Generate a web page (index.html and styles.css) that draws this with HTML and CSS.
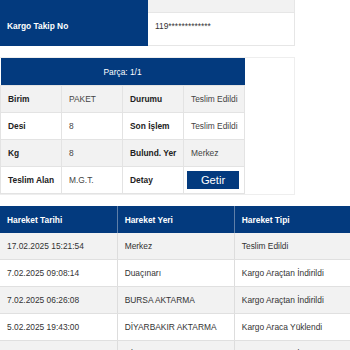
FILE: index.html
```html
<!DOCTYPE html>
<html lang="tr">
<head>
<meta charset="utf-8">
<link rel="stylesheet" href="styles.css">
</head>
<body>
<table class="info">
  <tr class="info-top">
    <th></th>
    <td></td>
  </tr>
  <tr class="info-main">
    <th>Kargo Takip No</th>
    <td>119*************</td>
  </tr>
</table>

<div class="piece-box">
  <table class="piece">
    <tr>
      <th colspan="4" class="piece-head">Parça: 1/1</th>
    </tr>
    <tr class="alt">
      <td class="lbl">Birim</td><td>PAKET</td>
      <td class="lbl">Durumu</td><td>Teslim Edildi</td>
    </tr>
    <tr>
      <td class="lbl">Desi</td><td>8</td>
      <td class="lbl">Son İşlem</td><td>Teslim Edildi</td>
    </tr>
    <tr class="alt">
      <td class="lbl">Kg</td><td>8</td>
      <td class="lbl">Bulund. Yer</td><td>Merkez</td>
    </tr>
    <tr>
      <td class="lbl">Teslim Alan</td><td>M.G.T.</td>
      <td class="lbl">Detay</td><td class="btn-cell"><button class="btn">Getir</button></td>
    </tr>
  </table>
</div>

<table class="history">
  <tr>
    <th>Hareket Tarihi</th>
    <th>Hareket Yeri</th>
    <th>Hareket Tipi</th>
  </tr>
  <tr class="alt">
    <td>17.02.2025 15:21:54</td><td>Merkez</td><td>Teslim Edildi</td>
  </tr>
  <tr>
    <td>7.02.2025 09:08:14</td><td>Duaçınarı</td><td>Kargo Araçtan İndirildi</td>
  </tr>
  <tr class="alt">
    <td>7.02.2025 06:26:08</td><td>BURSA AKTARMA</td><td>Kargo Araçtan İndirildi</td>
  </tr>
  <tr>
    <td>5.02.2025 19:43:00</td><td>DİYARBAKIR AKTARMA</td><td>Kargo Araca Yüklendi</td>
  </tr>
  <tr class="alt">
    <td>5.02.2025 18:12:41</td><td>DİYARBAKIR AKTARMA</td><td>Kargo Araçtan İndirildi</td>
  </tr>
</table>
</body>
</html>
```

FILE: styles.css
```css
html, body {
  margin: 0;
  padding: 0;
  background: #ffffff;
  overflow: hidden;
}

body {
  font-family: "Liberation Sans", Arial, sans-serif;
  font-size: 8.4px;
  color: #333333;
  width: 350px;
  height: 350px;
}

table {
  border-collapse: collapse;
  border-spacing: 0;
}

th, td {
  padding: 0 0 0 7px;
  text-align: left;
  vertical-align: middle;
}

/* top info table */
.info {
  width: 295px;
  table-layout: fixed;
}

.info th {
  width: 141px;
  background: #033a7e;
  color: #ffffff;
  font-weight: bold;
}

.info td {
  border-right: 1px solid #e6e6e6;
  border-bottom: 1px solid #e6e6e6;
}

.info-top th,
.info-top td {
  height: 12px;
}

.info-top td {
  background: #f2f2f2;
}

.info-main th,
.info-main td {
  height: 26px;
  padding-bottom: 6px;
}

/* piece box */
.piece-box {
  margin-top: 11px;
  width: 294px;
  height: 136px;
  border-top: 1px solid #eeeeee;
  border-right: 1px solid #eeeeee;
  border-bottom: 1px solid #eeeeee;
}

.piece {
  width: 245px;
  table-layout: fixed;
}

.piece .piece-head {
  height: 27px;
  background: #033a7e;
  color: #ffffff;
  font-weight: normal;
  text-align: center;
  padding: 0;
}

.piece td {
  height: 26px;
  border: 1px solid #e3e3e3;
  color: #444444;
  background: #ffffff;
}

.piece tr.alt td {
  background: #f2f2f2;
}

.piece td.lbl {
  font-weight: bold;
  color: #222222;
}

.piece td:nth-child(1) { width: 55px; }
.piece td:nth-child(2) { width: 54px; }
.piece td:nth-child(3) { width: 54px; }

.piece td.btn-cell {
  padding-left: 3px;
}

.btn {
  display: block;
  width: 52px;
  height: 18px;
  border: none;
  margin: 0;
  padding: 0;
  background: #033a7e;
  color: #ffffff;
  font-family: "Liberation Sans", Arial, sans-serif;
  font-size: 11.2px;
  text-align: center;
  line-height: 18px;
}

/* history table */
.history {
  margin-top: 11px;
  width: 352px;
  table-layout: fixed;
}

.history th {
  height: 27px;
  background: #033a7e;
  color: #ffffff;
  font-weight: bold;
  border-right: 1px solid #5f7fa8;
}

.history td {
  height: 26px;
  border-right: 1px solid #dddddd;
  border-bottom: 1px solid #e0e0e0;
  background: #ffffff;
}

.history tr.alt td {
  background: #f2f2f2;
}
```
